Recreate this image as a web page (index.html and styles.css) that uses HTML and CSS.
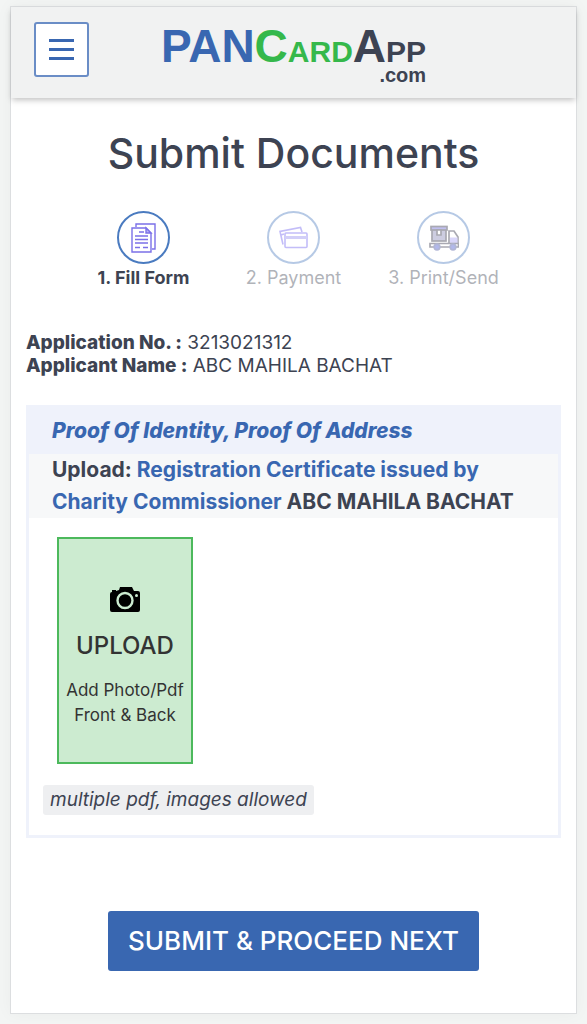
FILE: index.html
```html
<!DOCTYPE html>
<html lang="en">
<head>
<meta charset="utf-8">
<meta name="viewport" content="width=device-width, initial-scale=1">
<title>Submit Documents - PANCardApp.com</title>
<link rel="stylesheet" href="styles.css">
</head>

<body>

<div class="page">

<header>
    <button class="menu-btn" type="button" aria-label="Menu">
        <span></span>
        <span></span>
        <span></span>
    </button>
    <a class="logo" href="#">
        <span class="logo-name"><span class="blue">PAN</span><span class="green">C<small>ARD</small></span><span class="dark">A<small>PP</small></span></span>
        <span class="logo-com">.com</span>
    </a>
</header>

<main>
    <h1>Submit Documents</h1>

    <ol class="steps">
        <li class="active">
            <span class="circle">
                <svg width="26" height="30" viewBox="0 0 26 30" fill="none" stroke="#7b70e8" stroke-width="1.4">
                    <path d="M5 4V1h19v25h-3"/>
                    <path d="M1 5h14l5 5v19H1z"/>
                    <path d="M15 5v5h5z" fill="#b9b4f5"/>
                    <path d="M8 9h5M4 13h13M4 16.500h13M4 20h13M4 24.500h5M12 24.500h5"/>
                </svg>
            </span>
            <span>1. Fill Form</span>
        </li>
        <li>
            <span class="circle">
                <svg width="30" height="24" viewBox="0 0 30 24" fill="none" stroke="#6a5cf0" stroke-width="1.600">
                    <path d="M4 18.500 1 5.500 21.500 1.500 23 6"/>
                    <path d="M2 9l3-1"/>
                    <rect x="6" y="7" width="22" height="14.500" rx="1"/>
                    <path d="M6 11.500h22" stroke-width="3" stroke="#9088f0"/>
                </svg>
            </span>
            <span>2. Payment</span>
        </li>
        <li>
            <span class="circle">
                <svg width="30" height="26" viewBox="0 0 30 26" fill="none" stroke="#2b2b40" stroke-width="1.700">
                    <rect x="3" y="4" width="14" height="12" fill="#8583b5"/>
                    <rect x="2" y="1.500" width="16" height="3.500" fill="#6461d8"/>
                    <path d="M8 5v5h4V5z" fill="#fff"/>
                    <path d="M20 19V6h5l4 6v7z" fill="#fff"/>
                    <path d="M21 12.500h7.500v6H21z" fill="#a29bf5" stroke="none"/>
                    <path d="M1 18.500h28.500v3.500H1z" fill="#fff"/>
                    <circle cx="8" cy="22" r="2.800" fill="#3f4fd0" stroke="#3f4a9a"/>
                    <circle cx="24" cy="22" r="2.800" fill="#3f4fd0" stroke="#3f4a9a"/>
                </svg>
            </span>
            <span>3. Print/Send</span>
        </li>
    </ol>

    <div class="info">
        <p><b>Application No. :</b> 3213021312</p>
        <p><b>Applicant Name :</b> ABC MAHILA BACHAT</p>
    </div>

    <section class="proof">
        <h2>Proof Of Identity, Proof Of Address</h2>
        <p class="doc">Upload: <span class="blue">Registration Certificate issued by Charity Commissioner</span> ABC MAHILA BACHAT</p>
        <button class="upload" type="button">
            <svg width="32" height="28" viewBox="0 0 32 28">
                <path d="M3 6V4h4v1l3-1 1-3h12l2 4h4q2 0 2 2v17q0 2-2 2H3q-2 0-2-2V8q0-2 2-2z" fill="#000"/>
                <circle cx="16" cy="14.500" r="7.500" fill="none" stroke="#ccebd0" stroke-width="2.400"/>
                <circle cx="27.500" cy="9.500" r="1.500" fill="#ccebd0"/>
            </svg>
            <strong>UPLOAD</strong>
            <span>Add Photo/Pdf<br>Front &amp; Back</span>
        </button>
        <p class="note">multiple pdf, images allowed</p>
    </section>

    <button class="submit" type="submit">SUBMIT &amp; PROCEED NEXT</button>
</main>

</div>

</body>
</html>
```
FILE: styles.css
```css
* {
    box-sizing: border-box;
}

body {
    margin: 0;
    padding: 6px 10px 9px;
    background: #f3f5f4;
    color: #3d4352;
    font-family: Inter, "Liberation Sans", sans-serif;
    font-size: 19px;
}

h1, h2, p, ol {
    margin: 0;
    padding: 0;
}

button {
    font-family: inherit;
    cursor: pointer;
}

.blue {
    color: #3967b1;
}

.green {
    color: #35b84b;
}

.dark {
    color: #3d4352;
}

.page {
    background: #fff;
    border: 1px solid #dcdee0;
    box-shadow: 0 0 16px rgba(0,0,0,0.04);
}

/* header */
header {
    display: grid;
    grid-template-columns: 55px 1fr 55px;
    align-items: start;
    height: 91px;
    padding: 15px 23px;
    background: #f1f2f2;
    box-shadow: 0 3px 6px -1px rgba(0,0,0,0.25);
}

.menu-btn {
    display: flex;
    flex-direction: column;
    align-items: center;
    justify-content: center;
    gap: 6px;
    height: 55px;
    padding: 0;
    background: #fff;
    border: 2px solid #6a8dc6;
    border-radius: 3px;
}

.menu-btn span {
    width: 25px;
    height: 3px;
    background: #3967b1;
}

.logo {
    display: flex;
    flex-direction: column;
    justify-self: center;
    padding-top: 3px;
    font-family: "Liberation Sans", Arial, sans-serif;
    font-weight: bold;
    text-decoration: none;
}

.logo-name {
    font-size: 46px;
    line-height: 42px;
}

.logo-name small {
    font-size: 30px;
    line-height: 1;
}

.logo-com {
    align-self: flex-end;
    color: #3d4352;
    font-size: 20px;
    line-height: 16px;
}

/* content */
main {
    display: flex;
    flex-direction: column;
    padding: 28px 15px 42px;
}

h1 {
    font-size: 41px;
    font-weight: 500;
    line-height: 54px;
    text-align: center;
}

.steps {
    display: grid;
    grid-template-columns: repeat(3, 150px);
    justify-content: center;
    margin-top: 31px;
    list-style: none;
    font-size: 18px;
    line-height: 28px;
}

.steps li {
    display: flex;
    flex-direction: column;
    align-items: center;
    opacity: 0.4;
}

.steps .active {
    opacity: 1;
    font-weight: 700;
}

.circle {
    display: flex;
    align-items: center;
    justify-content: center;
    width: 53px;
    height: 53px;
    border: 2px solid #4a7bc0;
    border-radius: 50%;
}

.info {
    margin-top: 39px;
    line-height: 23px;
}

.info b {
    font-weight: 800;
}

.proof {
    margin-top: 28px;
    padding-bottom: 20px;
    border: 3px solid #eff2fb;
}

.proof h2 {
    padding: 0 23px;
    background: #eff2fb;
    color: #3967b1;
    font-size: 21px;
    font-style: italic;
    font-weight: 800;
    line-height: 46px;
}

.doc {
    padding: 0 23px;
    background: #f7f8f9;
    font-size: 21px;
    font-weight: 700;
    line-height: 32px;
}

.upload {
    display: flex;
    flex-direction: column;
    align-items: center;
    width: 136px;
    height: 227px;
    margin: 19px 0 0 28px;
    padding: 47px 0 0;
    background: #ccebd0;
    border: 2px solid #4cb95c;
    color: #333;
    font-size: 17px;
    line-height: 25px;
}

.upload strong {
    margin: 16px 0;
    font-size: 24px;
    font-weight: 500;
    line-height: 32px;
}

.note {
    width: fit-content;
    margin: 21px 0 0 14px;
    padding: 0 7px;
    background: #eeeff1;
    border-radius: 3px;
    font-style: italic;
    line-height: 30px;
}

.submit {
    align-self: center;
    margin-top: 73px;
    padding: 0 20px;
    background: #3967b1;
    border: none;
    border-radius: 3px;
    color: #fff;
    font-size: 26px;
    font-weight: 500;
    line-height: 60px;
}
```
